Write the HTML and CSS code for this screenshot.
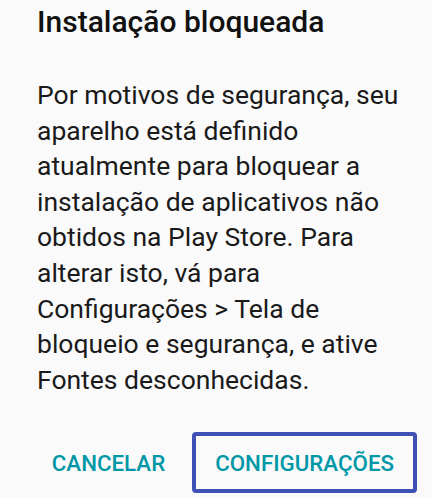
FILE: index.html
```html
<!DOCTYPE html>
<html lang="pt">
<head>
<meta charset="utf-8">
<link rel="stylesheet" href="styles.css">
</head>
<body>
<div class="dialog">
  <h1 class="title">Instalação bloqueada</h1>
  <p class="message">Por motivos de segurança, seu aparelho está definido atualmente para bloquear a instalação de aplicativos não obtidos na Play Store. Para alterar isto, vá para Configurações &gt; Tela de bloqueio e segurança, e ative Fontes desconhecidas.</p>
  <div class="actions">
    <button class="btn">CANCELAR</button>
    <button class="btn btn-focus">CONFIGURAÇÕES</button>
  </div>
</div>
</body>
</html>
```
FILE: styles.css
```css
html, body {
  margin: 0;
  padding: 0;
  background: #fafafa;
}
.dialog {
  width: 432px;
  height: 498px;
  box-sizing: border-box;
  padding: 0 15px 0 37px;
  font-family: Roboto, "Liberation Sans", sans-serif;
  display: flex;
  flex-direction: column;
}
.title {
  margin: 0;
  font-size: 30px;
  font-weight: 500;
  color: #111;
  line-height: 32px;
  padding-top: 6px;
}
.message {
  margin: 39px 0 0;
  font-size: 26.5px;
  line-height: 35.6px;
  color: #1a1a1a;
}
.actions {
  margin-top: auto;
  display: flex;
  justify-content: flex-end;
  align-items: center;
  gap: 4px;
  padding-bottom: 5px;
}
.btn {
  font-family: Roboto, "Liberation Sans", sans-serif;
  font-weight: 500;
  font-size: 22.3px;
  color: #0097a7;
  background: transparent;
  border: 4px solid transparent;
  border-radius: 4px;
  height: 61px;
  padding: 0 19px;
  box-sizing: border-box;
}
.btn-focus {
  border-color: #3f51b5;
}
```
